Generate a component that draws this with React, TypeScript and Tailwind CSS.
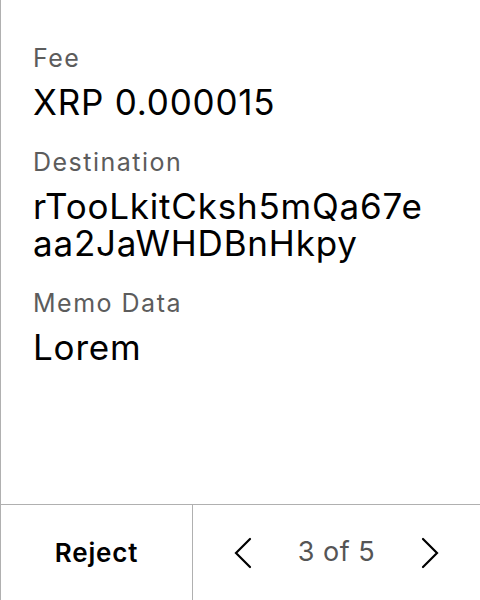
import React from 'react';

const fields = [
  { label: 'Fee', value: 'XRP 0.000015' },
  { label: 'Destination', value: 'rTooLkitCksh5mQa67eaa2JaWHDBnHkpy' },
  { label: 'Memo Data', value: 'Lorem' },
];

const Chevron = ({ dir }: { dir: 'left' | 'right' }) => (
  <svg width="18" height="32" viewBox="0 0 18 32" fill="none" stroke="#000" strokeWidth="2.2" strokeLinecap="round" strokeLinejoin="miter">
    {dir === 'left' ? <polyline points="16,2 2,16 16,30" /> : <polyline points="2,2 16,16 2,30" />}
  </svg>
);

const App = () => {
  return (
    <div className="w-[480px] h-[600px] flex flex-col bg-white border-l border-[#b0b0b0] font-['Inter',sans-serif]">
      <div className="flex-1 flex flex-col gap-[26px] pl-[32px] pr-[42px] pt-[43px]">
        {fields.map((f) => (
          <div key={f.label} className="flex flex-col gap-[11px]">
            <div className="text-[25px] leading-[30px] tracking-[1.5px] text-[#5c5c5c]">{f.label}</div>
            <div className="text-[35px] leading-[37px] tracking-[0.8px] text-black break-all">{f.value}</div>
          </div>
        ))}
      </div>
      <div className="h-[96px] flex border-t border-[#b0b0b0]">
        <button className="w-[192px] flex items-center justify-center border-r border-[#b0b0b0] text-[26px] font-semibold tracking-[0.8px] text-black">
          Reject
        </button>
        <div className="flex-1 flex items-center justify-center gap-[46px]">
          <Chevron dir="left" />
          <span className="text-[27px] tracking-[0.5px] text-[#555]">3 of 5</span>
          <Chevron dir="right" />
        </div>
      </div>
    </div>
  );
};

export default App;
